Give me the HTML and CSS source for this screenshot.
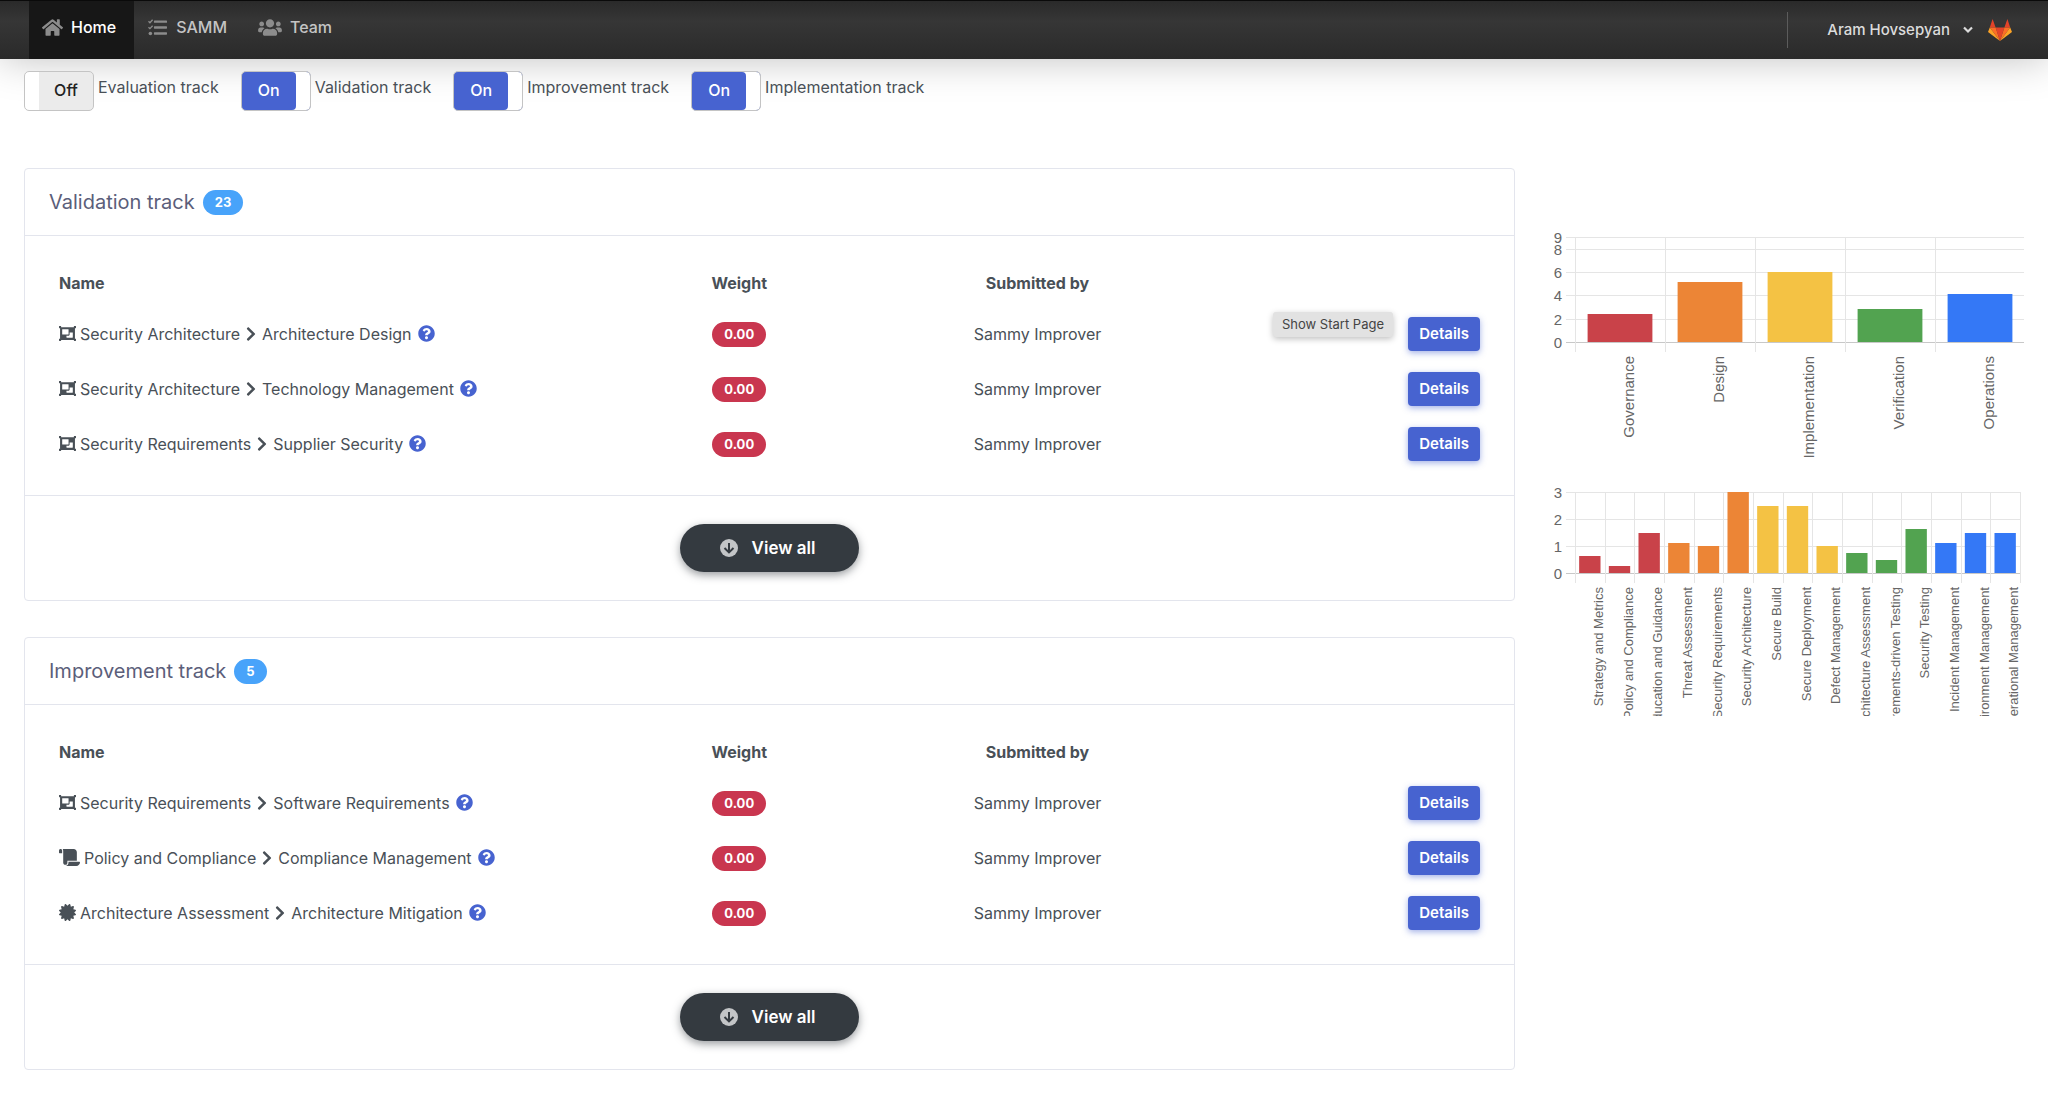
FILE: index.html
```html
<!DOCTYPE html>
<html lang="en">
<head>
<meta charset="utf-8">
<meta name="viewport" content="width=device-width, initial-scale=1">
<title>SAMM dashboard</title>
<link rel="stylesheet" href="styles.css">
</head>
<body>
<svg class="sprite" aria-hidden="true">
  <symbol id="i-home" viewBox="0 0 576 512"><path d="M280.37 148.26L96 300.11V464a16 16 0 0 0 16 16l112.06-.29a16 16 0 0 0 15.92-16V368a16 16 0 0 1 16-16h64a16 16 0 0 1 16 16v95.64a16 16 0 0 0 16 16.05L464 480a16 16 0 0 0 16-16V300L295.67 148.26a12.19 12.19 0 0 0-15.3 0zM571.6 251.47L488 182.56V44.05a12 12 0 0 0-12-12h-56a12 12 0 0 0-12 12v72.61L318.47 43a48 48 0 0 0-61 0L4.34 251.47a12 12 0 0 0-1.6 16.9l25.5 31A12 12 0 0 0 45.15 301l235.22-193.74a12.19 12.19 0 0 1 15.3 0L530.9 301a12 12 0 0 0 16.9-1.6l25.5-31a12 12 0 0 0-1.7-16.93z"/></symbol>
  <symbol id="i-tasks" viewBox="0 0 512 512"><path d="M176 64h320q16 0 16 16v32q0 16-16 16H176q-16 0-16-16V80q0-16 16-16zM176 224h320q16 0 16 16v32q0 16-16 16H176q-16 0-16-16v-32q0-16 16-16zM176 384h320q16 0 16 16v32q0 16-16 16H176q-16 0-16-16v-32q0-16 16-16z"/><circle cx="64" cy="416" r="48"/><path d="M14 88l38 38 72-78M14 248l38 38 72-78" fill="none" stroke="currentColor" stroke-width="36"/></symbol>
  <symbol id="i-users" viewBox="0 0 640 512"><path d="M96 224c35.3 0 64-28.7 64-64s-28.7-64-64-64-64 28.7-64 64 28.7 64 64 64zm448 0c35.3 0 64-28.7 64-64s-28.7-64-64-64-64 28.7-64 64 28.7 64 64 64zm32 32h-64c-17.6 0-33.5 7.1-45.1 18.6 40.3 22.1 68.9 62 75.1 109.4h66c17.7 0 32-14.3 32-32v-32c0-35.3-28.7-64-64-64zm-256 0c61.9 0 112-50.1 112-112S381.9 32 320 32 208 82.1 208 144s50.1 112 112 112zm76.8 32h-8.3c-20.8 10-43.9 16-68.5 16s-47.6-6-68.5-16h-8.3C179.6 288 128 339.6 128 403.2V432c0 26.5 21.5 48 48 48h288c26.5 0 48-21.5 48-48v-28.8c0-63.6-51.6-115.2-115.2-115.2zm-223.7-13.4C161.5 263.1 145.6 256 128 256H64c-35.3 0-64 28.7-64 64v32c0 17.7 14.3 32 32 32h65.9c6.3-47.4 34.9-87.3 75.2-109.4z"/></symbol>
  <symbol id="i-group" viewBox="0 0 512 512"><path d="M480 128V96h20c6.627 0 12-5.373 12-12V44c0-6.627-5.373-12-12-12h-40c-6.627 0-12 5.373-12 12v20H64V44c0-6.627-5.373-12-12-12H12C5.373 32 0 37.373 0 44v40c0 6.627 5.373 12 12 12h20v320H12c-6.627 0-12 5.373-12 12v40c0 6.627 5.373 12 12 12h40c6.627 0 12-5.373 12-12v-20h384v20c0 6.627 5.373 12 12 12h40c6.627 0 12-5.373 12-12v-40c0-6.627-5.373-12-12-12h-20V128zM96 276V140c0-6.627 5.373-12 12-12h168c6.627 0 12 5.373 12 12v136c0 6.627-5.373 12-12 12H108c-6.627 0-12-5.373-12-12zm320 96c0 6.627-5.373 12-12 12H236c-6.627 0-12-5.373-12-12v-52h72c13.255 0 24-10.745 24-24v-72h84c6.627 0 12 5.373 12 12v136z" fill-rule="evenodd"/></symbol>
  <symbol id="i-scroll" viewBox="0 0 640 512"><path d="M48 0C21.500 0 0 21.500 0 48v64c0 8.800 7.200 16 16 16h80V48C96 21.500 74.500 0 48 0zm208 412.600V352h288V96c0-52.900-43.100-96-96-96H111.600C121.700 13.400 128 29.900 128 48v368c0 38.900 34.700 69.700 74.800 63.100C234.200 474 256 444.500 256 412.600zM288 384v32c0 52.900-43.100 96-96 96h336c61.900 0 112-50.100 112-112 0-8.800-7.200-16-16-16H288z"/></symbol>
  <symbol id="i-cert" viewBox="0 0 512 512"><path d="M458.622 255.92l45.985-45.005c13.708-12.977 7.316-36.039-10.664-40.339l-62.65-15.99 17.661-62.015c4.991-17.838-11.829-34.663-29.661-29.671l-61.994 17.667-15.984-62.671C337.085.197 313.765-6.276 300.99 7.228L256 53.57 211.011 7.229c-12.63-13.351-36.047-7.234-40.325 10.668l-15.984 62.671-61.995-17.667C74.87 57.907 58.056 74.738 63.046 92.572l17.661 62.015-62.65 15.99C.069 174.878-6.31 197.944 7.392 210.915l45.985 45.005-45.985 45.004c-13.708 12.977-7.316 36.039 10.664 40.339l62.65 15.99-17.661 62.015c-4.991 17.838 11.829 34.663 29.661 29.671l61.994-17.667 15.984 62.671c4.439 18.575 27.696 24.018 40.325 10.668L256 458.61l44.989 46.001c12.5 13.488 35.987 7.486 40.325-10.668l15.984-62.671 61.994 17.667c17.836 4.994 34.651-11.837 29.661-29.671l-17.661-62.015 62.65-15.99c17.987-4.302 24.366-27.367 10.664-40.339l-45.984-45.004z"/></symbol>
  <symbol id="i-chev" viewBox="0 0 320 512"><path d="M285.476 272.971L91.132 467.314c-9.373 9.373-24.569 9.373-33.941 0l-22.667-22.667c-9.357-9.357-9.375-24.522-.04-33.901L188.505 256 34.484 101.255c-9.335-9.379-9.317-24.544.04-33.901l22.667-22.667c9.373-9.373 24.569-9.373 33.941 0L285.475 239.03c9.373 9.372 9.373 24.568.001 33.941z"/></symbol>
  <symbol id="i-help" viewBox="0 0 512 512"><path d="M504 256c0 136.997-111.043 248-248 248S8 392.997 8 256C8 119.083 119.043 8 256 8s248 111.083 248 248zM262.655 90c-54.497 0-89.255 22.957-116.549 63.758-3.536 5.286-2.353 12.415 2.715 16.258l34.699 26.31c5.205 3.947 12.621 3.008 16.665-2.122 17.864-22.658 30.113-35.797 57.303-35.797 20.429 0 45.698 13.148 45.698 32.958 0 14.976-12.363 22.667-32.534 33.976C247.128 238.528 216 254.941 216 296v4c0 6.627 5.373 12 12 12h56c6.627 0 12-5.373 12-12v-1.333c0-28.462 83.186-29.647 83.186-106.667 0-58.002-60.165-102-116.531-102zM256 338c-25.365 0-46 20.635-46 46 0 25.364 20.635 46 46 46s46-20.636 46-46c0-25.365-20.635-46-46-46z"/></symbol>
  <symbol id="i-down" viewBox="0 0 18 18"><circle cx="9" cy="9" r="9"/><path d="M9 4v9M4.500 9L9 13.400 13.500 9" fill="none" stroke="#343a40" stroke-width="2"/></symbol>
  <symbol id="i-caret" viewBox="0 0 10 8"><path d="M1 1.500l4 4 4-4" fill="none" stroke="currentColor" stroke-width="2.200"/></symbol>
  <symbol id="i-fox" viewBox="0 0 24 22"><path fill="#e24329" d="M12 22L7.600 8.500h8.800zM1.800 8.500L4.600 0l3 8.500zM22.200 8.500L19.400 0l-3 8.500z"/><path fill="#fc6d26" d="M12 22L7.600 8.500H1.800zM12 22l4.400-13.500h5.800z"/><path fill="#fca326" d="M1.800 8.500L0 13l12 9zM22.200 8.500L24 13l-12 9z"/></symbol>
</svg>

<header class="topbar">
  <nav class="nav">
    <a class="nav-link active" href="#home"><svg class="nav-icon"><use href="#i-home"/></svg>Home</a>
    <a class="nav-link" href="#samm"><svg class="nav-icon"><use href="#i-tasks"/></svg>SAMM</a>
    <a class="nav-link" href="#team"><svg class="nav-icon nav-icon-wide"><use href="#i-users"/></svg>Team</a>
  </nav>
  <button class="user" type="button">
    Aram Hovsepyan
    <svg class="caret"><use href="#i-caret"/></svg>
    <svg class="fox"><use href="#i-fox"/></svg>
  </button>
</header>

<main class="page">
  <form class="tracks">
    <label class="track"><input class="switch-input" type="checkbox"><span class="switch"></span><span class="track-name">Evaluation track</span></label>
    <label class="track"><input class="switch-input" type="checkbox" checked><span class="switch"></span><span class="track-name">Validation track</span></label>
    <label class="track"><input class="switch-input" type="checkbox" checked><span class="switch"></span><span class="track-name">Improvement track</span></label>
    <label class="track"><input class="switch-input" type="checkbox" checked><span class="switch"></span><span class="track-name">Implementation track</span></label>
  </form>

  <div class="columns">
    <div class="cards">
      <section class="card">
        <h2 class="card-head">Validation track <span class="count">23</span></h2>
        <div class="card-body">
          <table class="items">
            <thead><tr><th class="col-name">Name</th><th class="col-weight">Weight</th><th class="col-by">Submitted by</th><th class="col-action"></th></tr></thead>
            <tbody>
              <tr><td><span class="path"><svg class="icon"><use href="#i-group"/></svg>Security Architecture<svg class="sep"><use href="#i-chev"/></svg>Architecture Design<svg class="help"><use href="#i-help"/></svg></span></td><td class="mid"><span class="weight">0.00</span></td><td class="mid">Sammy Improver</td><td class="end"><span class="action"><button class="details" type="button">Details</button><span class="tooltip" role="tooltip">Show Start Page</span></span></td></tr>
              <tr><td><span class="path"><svg class="icon"><use href="#i-group"/></svg>Security Architecture<svg class="sep"><use href="#i-chev"/></svg>Technology Management<svg class="help"><use href="#i-help"/></svg></span></td><td class="mid"><span class="weight">0.00</span></td><td class="mid">Sammy Improver</td><td class="end"><button class="details" type="button">Details</button></td></tr>
              <tr><td><span class="path"><svg class="icon"><use href="#i-group"/></svg>Security Requirements<svg class="sep"><use href="#i-chev"/></svg>Supplier Security<svg class="help"><use href="#i-help"/></svg></span></td><td class="mid"><span class="weight">0.00</span></td><td class="mid">Sammy Improver</td><td class="end"><button class="details" type="button">Details</button></td></tr>
            </tbody>
          </table>
        </div>
        <div class="card-foot"><button class="view-all" type="button"><svg class="down"><use href="#i-down"/></svg>View all</button></div>
      </section>

      <section class="card">
        <h2 class="card-head">Improvement track <span class="count">5</span></h2>
        <div class="card-body">
          <table class="items">
            <thead><tr><th class="col-name">Name</th><th class="col-weight">Weight</th><th class="col-by">Submitted by</th><th class="col-action"></th></tr></thead>
            <tbody>
              <tr><td><span class="path"><svg class="icon"><use href="#i-group"/></svg>Security Requirements<svg class="sep"><use href="#i-chev"/></svg>Software Requirements<svg class="help"><use href="#i-help"/></svg></span></td><td class="mid"><span class="weight">0.00</span></td><td class="mid">Sammy Improver</td><td class="end"><button class="details" type="button">Details</button></td></tr>
              <tr><td><span class="path"><svg class="icon icon-wide"><use href="#i-scroll"/></svg>Policy and Compliance<svg class="sep"><use href="#i-chev"/></svg>Compliance Management<svg class="help"><use href="#i-help"/></svg></span></td><td class="mid"><span class="weight">0.00</span></td><td class="mid">Sammy Improver</td><td class="end"><button class="details" type="button">Details</button></td></tr>
              <tr><td><span class="path"><svg class="icon"><use href="#i-cert"/></svg>Architecture Assessment<svg class="sep"><use href="#i-chev"/></svg>Architecture Mitigation<svg class="help"><use href="#i-help"/></svg></span></td><td class="mid"><span class="weight">0.00</span></td><td class="mid">Sammy Improver</td><td class="end"><button class="details" type="button">Details</button></td></tr>
            </tbody>
          </table>
        </div>
        <div class="card-foot"><button class="view-all" type="button"><svg class="down"><use href="#i-down"/></svg>View all</button></div>
      </section>
    </div>

    <aside class="charts">
      <svg class="chart" id="functions" viewBox="0 0 479 240" role="img" aria-label="Score by business function"></svg>
      <svg class="chart" id="practices" viewBox="0 0 479 240" role="img" aria-label="Score by security practice"></svg>
    </aside>
  </div>
</main>
<script src="charts.js"></script>
</body>
</html>
```
FILE: styles.css
```css
* { box-sizing: border-box; }

body {
  margin: 0;
  background: #fff;
  color: #495057;
  font: 16px/24px Inter, "Liberation Sans", sans-serif;
}

button { font: inherit; border: 0; cursor: pointer; }
svg { flex: none; fill: currentColor; }
.sprite { display: none; }

/* Top bar */
.topbar {
  display: flex;
  justify-content: space-between;
  height: 59px;
  padding: 0 36px 0 29px;
  border-top: 1px solid #0a0a0a;
  background: linear-gradient(#2a2a2a, #363636 35%, #2a2a2a);
  box-shadow: 0 0 40px rgba(0, 0, 0, .25);
}
.nav { display: flex; }
.nav-link {
  display: flex;
  align-items: center;
  gap: 8px;
  padding: 0 18px 6px 13px;
  color: #c4c4c4;
  font-weight: 500;
  text-decoration: none;
}
.nav-link.active { background: #171717; color: #fff; }
.nav-icon { width: 21px; height: 19px; color: #8c8c8c; }
.nav-icon-wide { width: 24px; }
.user {
  display: flex;
  align-items: center;
  align-self: center;
  height: 36px;
  padding: 0 0 0 39px;
  border-left: 1px solid #5c5c5c;
  background: none;
  color: #dcdcdc;
  font-size: 15px;
  font-weight: 500;
}
.caret { width: 10px; height: 8px; margin: 0 15px 0 13px; }
.fox { width: 24px; height: 22px; }

/* Track switches */
.page { padding: 12px 24px 22px; }
.tracks { display: flex; gap: 22px; }
.track { position: relative; display: flex; gap: 4px; }
.switch-input { position: absolute; inset: 0 auto auto 0; margin: 0; opacity: 0; }
.switch {
  width: 70px;
  height: 40px;
  border: 1px solid #c4c4c4;
  border-radius: 5px;
  background: linear-gradient(90deg, #fff 14px, #ebebeb 14px);
  color: #222;
  font-weight: 500;
  line-height: 37px;
  text-align: center;
  padding-left: 14px;
}
.switch::before { content: "Off"; }
.switch-input:checked + .switch {
  padding: 0 14px 0 0;
  background: #4763d0;
  color: #fff;
  box-shadow: inset -14px 0 #fff;
}
.switch-input:checked + .switch::before { content: "On"; }
.track-name { padding-top: 4px; }

/* Columns */
.columns {
  display: grid;
  grid-template-columns: minmax(0, 1491fr) minmax(0, 479fr);
  gap: 30px;
  margin-top: 57px;
}
.cards { display: grid; gap: 36px; }
.card { border: 1px solid #e3e5ed; border-radius: 4px; }
.card-head {
  display: flex;
  align-items: center;
  gap: 8px;
  height: 67px;
  margin: 0;
  padding: 0 24px;
  border-bottom: 1px solid #e3e5ed;
  color: #5b5e7a;
  font-size: 20px;
  font-weight: 400;
}
.count, .weight {
  display: inline-block;
  border-radius: 13px;
  padding: 0 12px;
  color: #fff;
  font-size: 13px;
  font-weight: 700;
  line-height: 25px;
}
.count { background: #48a3fa; }
.weight { background: #c9364f; vertical-align: middle; }
.card-body { padding: 24px; }
.items { width: 100%; border-collapse: collapse; table-layout: fixed; }
.items th { height: 46px; padding: 0 10px; font-weight: 700; }
.items td { height: 55px; padding: 0 10px; }
.col-name { width: 37%; text-align: left; }
.items .col-name { text-align: left; }
.col-weight { width: 21.8%; }
.col-by { width: 19.6%; }
.mid { text-align: center; }
.end { text-align: right; }
.path { display: flex; align-items: center; }
.icon { width: 17px; height: 17px; margin-right: 4px; }
.icon-wide { width: 21px; }
.sep { width: 10px; height: 16px; margin: 0 6px; }
.help { width: 17px; height: 17px; margin-left: 6px; color: #4763d0; }
.details {
  height: 34px;
  padding: 0 11px;
  border-radius: 4px;
  background: #4763d0;
  box-shadow: 0 2px 6px rgba(71, 99, 208, .5);
  color: #fff;
  font-size: 15px;
  font-weight: 600;
}
.action { position: relative; display: inline-block; }
.tooltip {
  position: absolute;
  right: 87px;
  top: -5px;
  padding: 0 9px;
  border-radius: 3px;
  background: #e2e2e2;
  box-shadow: 0 2px 6px rgba(0, 0, 0, .25);
  color: #444;
  font-size: 13px;
  line-height: 25px;
  white-space: nowrap;
}
.card-foot {
  display: flex;
  justify-content: center;
  padding: 28px;
  border-top: 1px solid #e3e5ed;
}
.view-all {
  display: flex;
  align-items: center;
  gap: 14px;
  height: 48px;
  padding: 0 44px 0 40px;
  border-radius: 24px;
  background: #343a40;
  box-shadow: 0 3px 8px rgba(52, 58, 64, .5);
  color: #fff;
  font-size: 17px;
  font-weight: 600;
}
.down { width: 18px; height: 18px; color: #c3c5c7; }

/* Charts */
.charts { padding-top: 60px; }
.chart { display: block; width: 100%; margin-bottom: 8px; overflow: hidden; }
.chart text { fill: #666; font-family: "Liberation Sans", sans-serif; text-anchor: end; }
.tick { font-size: 15px; }
.label-large { font-size: 15px; }
.label-small { font-size: 13px; }
.gridline { stroke: #e5e5e5; }
.axis { stroke: #c8c8c8; }
```
FILE: charts.js
```js
const RED = '#c94249', ORANGE = '#ec8536', YELLOW = '#f4c244', GREEN = '#52a350', BLUE = '#3478f6';

function add(svg, name, attrs, text) {
  const el = document.createElementNS('http://www.w3.org/2000/svg', name);
  for (const key in attrs) el.setAttribute(key, attrs[key]);
  if (text !== undefined) el.textContent = text;
  svg.appendChild(el);
}

function drawChart(id, o) {
  const svg = document.getElementById(id);
  const left = 30, bottom = o.top + o.height;
  const step = o.width / o.data.length;
  const y = v => Math.round(bottom - v * o.height / o.max);
  const line = (x1, y1, x2, y2, cls) => add(svg, 'line', { x1, y1, x2, y2, class: cls });

  o.ticks.forEach(t => {
    line(left - 9, y(t) + .5, left + o.width, y(t) + .5, t ? 'gridline' : 'axis');
    add(svg, 'text', { x: left - 13, y: y(t) + 6, class: 'tick' }, t);
  });
  for (let i = 0; i <= o.data.length; i++) {
    const x = Math.round(left + i * step) + .5;
    line(x, o.top, x, bottom + 10, 'gridline');
  }
  o.data.forEach(([label, value, fill], i) => {
    const mid = left + (i + .5) * step;
    add(svg, 'rect', { x: mid - step * .36, y: y(value), width: step * .72, height: bottom - y(value), fill });
    const x = mid + o.labelShift, ly = bottom + 14;
    add(svg, 'text', { x, y: ly, transform: `rotate(-90 ${x} ${ly})`, class: o.labelClass }, label);
  });
}

drawChart('functions', {
  top: 9, height: 105, width: 450, max: 9, ticks: [0, 2, 4, 6, 8, 9],
  labelShift: 14, labelClass: 'label-large',
  data: [['Governance', 2.37, RED], ['Design', 5.12, ORANGE], ['Implementation', 6, YELLOW],
    ['Verification', 2.87, GREEN], ['Operations', 4.12, BLUE]]
});

drawChart('practices', {
  top: 16, height: 81, width: 445, max: 3, ticks: [0, 1, 2, 3],
  labelShift: 13, labelClass: 'label-small',
  data: [['Strategy and Metrics', .62, RED], ['Policy and Compliance', .25, RED],
    ['Education and Guidance', 1.5, RED], ['Threat Assessment', 1.12, ORANGE],
    ['Security Requirements', 1, ORANGE], ['Security Architecture', 3, ORANGE],
    ['Secure Build', 2.5, YELLOW], ['Secure Deployment', 2.5, YELLOW],
    ['Defect Management', 1, YELLOW], ['Architecture Assessment', .75, GREEN],
    ['Requirements-driven Testing', .5, GREEN], ['Security Testing', 1.62, GREEN],
    ['Incident Management', 1.12, BLUE], ['Environment Management', 1.5, BLUE],
    ['Operational Management', 1.5, BLUE]]
});
```
